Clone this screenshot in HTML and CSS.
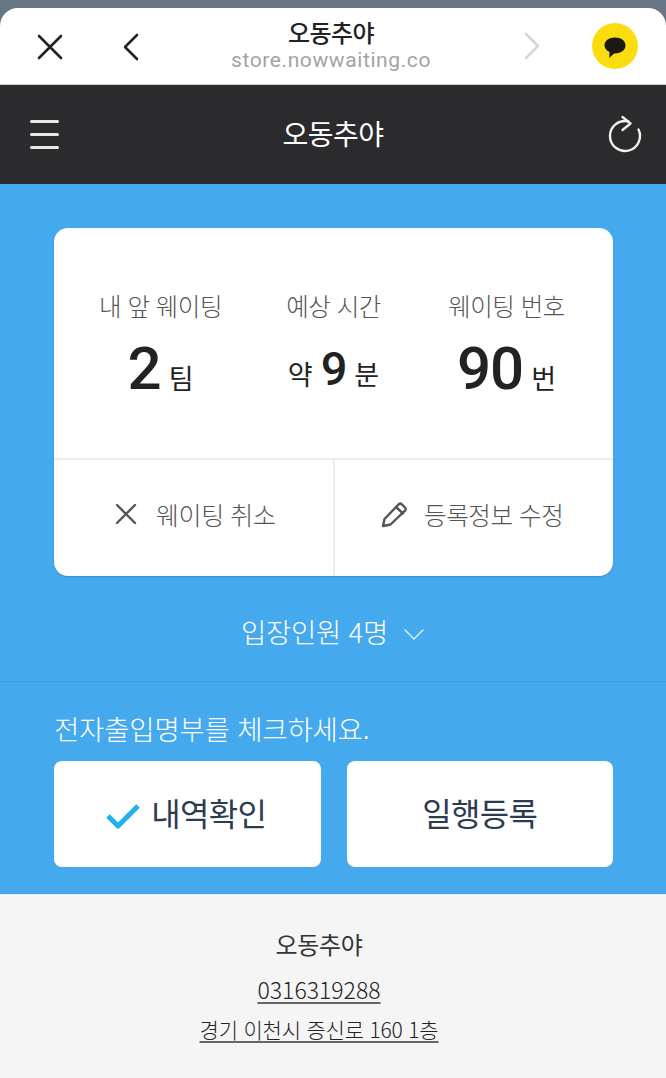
FILE: index.html
```html
<!DOCTYPE html>
<html lang="ko">
<head>
  <meta charset="UTF-8" />
  <title>오동추야</title>
  <link rel="stylesheet" href="styles.css">
</head>
<body>
  <!-- 브라우저 상단 -->
  <div class="browser">
    <div class="browser-bar">
      <svg class="ic-close" width="28" height="28" viewBox="0 0 28 28"><path d="M3 3L25 25M25 3L3 25" /></svg>
      <svg class="ic-back" width="18" height="28" viewBox="0 0 18 28"><path d="M15 2L3 14L15 26" /></svg>
      <div class="browser-title">
        <div class="browser-name">오동추야</div>
        <div class="browser-url">store.nowwaiting.co</div>
      </div>
      <svg class="ic-forward" width="18" height="28" viewBox="0 0 18 28"><path d="M3 2L15 14L3 26" /></svg>
      <div class="kakao">
        <svg width="24" height="24" viewBox="0 0 24 24"><path d="M12 2.500C5.800 2.500 1.500 5.800 1.500 10.300C1.500 13.300 3.500 15.700 6.500 17.100L6.300 23L11 18.500C11.300 18.500 11.700 18.500 12 18.500C18.200 18.500 22.500 15 22.500 10.300C22.500 5.800 18.200 2.500 12 2.500Z" /></svg>
      </div>
    </div>
  </div>

  <header class="top-nav">
    <div class="hamburger"><span></span><span></span><span></span></div>
    <h1>오동추야</h1>
    <svg class="ic-refresh" width="34" height="40" viewBox="0 0 34 40"><path d="M20 6.300A15 15 0 1 0 30.500 14.500" /><path d="M14.500 2L22.500 8.500L14.500 15" /></svg>
  </header>

  <main class="content">
    <section class="card">
      <div class="stats">
        <div class="stat">
          <div class="stat-label">내 앞 웨이팅</div>
          <div class="stat-value"><b>2</b><span>팀</span></div>
        </div>
        <div class="stat">
          <div class="stat-label">예상 시간</div>
          <div class="stat-value"><span>약</span><b class="small">9</b><span>분</span></div>
        </div>
        <div class="stat">
          <div class="stat-label">웨이팅 번호</div>
          <div class="stat-value"><b>90</b><span>번</span></div>
        </div>
      </div>
      <div class="actions">
        <a class="action">
          <svg class="ic-cancel" width="22" height="22" viewBox="0 0 22 22"><path d="M2 2L20 20M20 2L2 20" /></svg>
          웨이팅 취소
        </a>
        <a class="action">
          <svg class="ic-pencil" width="28" height="28" viewBox="0 0 28 28"><path d="M3 26L4.500 19L18.500 4.500C19.500 3.500 21 3.500 22 4.500L25 7.500C26 8.500 26 9.700 25 10.700L10.500 24.500Z" /><path d="M16 7L23 13.500" /></svg>
          등록정보 수정
        </a>
      </div>
    </section>

    <div class="people">
      입장인원 4명
      <svg class="ic-down" width="22" height="12" viewBox="0 0 22 12"><path d="M2 2L11 11L20 2" /></svg>
    </div>

    <section class="entry">
      <p class="entry-title">전자출입명부를 체크하세요.</p>
      <div class="entry-buttons">
        <a class="entry-btn checked">
          <svg class="ic-check" width="36" height="28" viewBox="0 0 36 28"><path d="M3 14L13 24L33 4" /></svg>
          내역확인
        </a>
        <a class="entry-btn">일행등록</a>
      </div>
    </section>
  </main>

  <footer class="store">
    <div class="store-name">오동추야</div>
    <a class="store-link phone">0316319288</a>
    <a class="store-link">경기 이천시 증신로 160 1층</a>
  </footer>
</body>
</html>
```

FILE: styles.css
```css
/* 기본 */
* {
  box-sizing: border-box;
}

html, body {
  height: 100%;
}

body {
  margin: 0;
  display: flex;
  flex-direction: column;
  background: #f5f5f5;
  color: #222;
  font-family: "Noto Sans CJK KR", Roboto, sans-serif;
  overflow: hidden;
}

svg {
  flex: none;
  fill: none;
  stroke-linecap: round;
  stroke-linejoin: round;
}

/* 브라우저 상단 */
.browser {
  height: 85px;
  padding-top: 8px;
  background: #667685;
}

.browser-bar {
  position: relative;
  height: 77px;
  border-radius: 18px 18px 0 0;
  background: #fff;
  display: flex;
  align-items: center;
  padding: 0 28px 0 36px;
  border-bottom: 1px solid #ccc;
}

.browser-bar svg {
  stroke: #222;
  stroke-width: 2.6;
}

.ic-close {
  margin-top: 1px;
}

.ic-back {
  margin-left: 58px;
  margin-top: 1px;
}

.browser-title {
  flex: 1;
  text-align: center;
  padding-right: 1px;
}

.browser-name {
  font-size: 24px;
  line-height: 30px;
  font-weight: 500;
  letter-spacing: -0.6px;
  margin-top: -3px;
}

.browser-url {
  font-family: Roboto, sans-serif;
  font-size: 21px;
  line-height: 26px;
  letter-spacing: 0.6px;
  color: #a3a3a3;
}

.browser-bar .ic-forward {
  stroke: #d6d6d6;
  margin-right: 51px;
}

.kakao {
  width: 46px;
  height: 46px;
  border-radius: 50%;
  background: #fbdc0f;
  display: flex;
  align-items: center;
  justify-content: center;
}

.browser-bar .kakao svg {
  fill: #1c1a10;
  stroke: none;
  margin-top: 1px;
}

/* 상단 메뉴 */
.top-nav {
  height: 99px;
  background: #2b2b2d;
  display: grid;
  grid-template-columns: 1fr auto 1fr;
  align-items: center;
  padding: 0 24px 0 30px;
}

.top-nav h1 {
  margin: 0 6px 4px 0;
  font-size: 28px;
  font-weight: 400;
  letter-spacing: -0.5px;
  color: #fff;
}

.hamburger {
  width: 29px;
  display: flex;
  flex-direction: column;
  gap: 10px;
}

.hamburger span {
  height: 3px;
  border-radius: 2px;
  background: #e8e8e8;
}

.ic-refresh {
  justify-self: end;
  stroke: #f0f0f0;
  stroke-width: 2.4;
}

/* 파란 영역 */
.content {
  height: 710px;
  background: #45a9ee;
  padding-top: 44px;
}

.card {
  height: 348px;
  margin: 0 53px 0 54px;
  border-radius: 14px;
  background: #fff;
  display: flex;
  flex-direction: column;
  box-shadow: 0 1px 2px rgba(0, 0, 0, 0.15);
}

.stats {
  height: 232px;
  display: flex;
  padding: 60px 20px 0;
  border-bottom: 2px solid #eeeeee;
}

.stat {
  flex: 1;
  text-align: center;
}

.stat-label {
  font-size: 24.5px;
  line-height: 36px;
  font-weight: 300;
  letter-spacing: -0.5px;
  color: #555;
}

.stat-value {
  height: 68px;
  margin-top: 11px;
  display: flex;
  align-items: baseline;
  justify-content: center;
  gap: 8px;
  color: #222;
}

.stat-value b {
  font-family: Roboto, sans-serif;
  font-size: 60px;
  line-height: 68px;
  font-weight: 500;
  letter-spacing: -1px;
}

.stat-value b.small {
  font-size: 47px;
}

.stat-value span {
  font-size: 27px;
  font-weight: 400;
}

.actions {
  flex: 1;
  display: flex;
  padding-bottom: 8px;
}

.action {
  flex: 1;
  display: flex;
  align-items: center;
  justify-content: center;
  gap: 19px;
  padding-left: 4px;
  font-size: 25px;
  font-weight: 300;
  letter-spacing: -0.4px;
  color: #555;
}

.action + .action {
  gap: 16px;
  padding: 0 4px 8px 0;
  font-size: 24.5px;
  margin-bottom: -8px;
  border-left: 2px solid #eeeeee;
}

.ic-cancel,
.ic-pencil {
  stroke: #555;
  stroke-width: 2.4;
}

/* 입장인원 */
.people {
  height: 106px;
  padding-top: 4px;
  display: flex;
  align-items: center;
  justify-content: center;
  gap: 15px;
  font-size: 27.5px;
  font-weight: 300;
  letter-spacing: -0.3px;
  color: #fff;
  border-bottom: 1px solid #3f9fe2;
}

.ic-down {
  stroke: #d5ebfb;
  stroke-width: 1.5;
  margin-top: 6px;
}

/* 전자출입명부 */
.entry {
  padding: 26px 53px 0 54px;
}

.entry-title {
  margin: 0;
  font-size: 27.5px;
  line-height: 40px;
  font-weight: 300;
  letter-spacing: -0.2px;
  color: #fff;
}

.entry-buttons {
  margin-top: 13px;
  display: grid;
  grid-template-columns: 1fr 1fr;
  gap: 26px;
}

.entry-btn {
  height: 106px;
  padding-bottom: 4px;
  border-radius: 8px;
  background: #fff;
  display: flex;
  align-items: center;
  justify-content: center;
  gap: 10px;
  font-size: 32px;
  letter-spacing: -0.7px;
  color: #2d3b50;
}

.entry-btn.checked {
  padding-right: 3px;
}

.ic-check {
  stroke: #1fb2ec;
  stroke-width: 5;
  stroke-linecap: butt;
  margin-top: 8px;
}

/* 하단 매장정보 */
.store {
  flex: 1;
  display: flex;
  flex-direction: column;
  align-items: center;
  padding: 31px 28px 0 0;
  border-top: 1px solid #e0eef8;
  color: #333;
}

.store-name {
  font-size: 24px;
  line-height: 36px;
  letter-spacing: -0.3px;
}

.store-link {
  font-size: 21px;
  line-height: 32px;
  margin-top: 8px;
  font-weight: 300;
  color: #222;
  text-decoration: underline #666 2px;
  text-underline-offset: 3px;
  letter-spacing: -0.2px;
}

.store-name + .store-link {
  margin-top: 11px;
}

.phone {
  font-size: 23px;
  letter-spacing: 0;
}
```
